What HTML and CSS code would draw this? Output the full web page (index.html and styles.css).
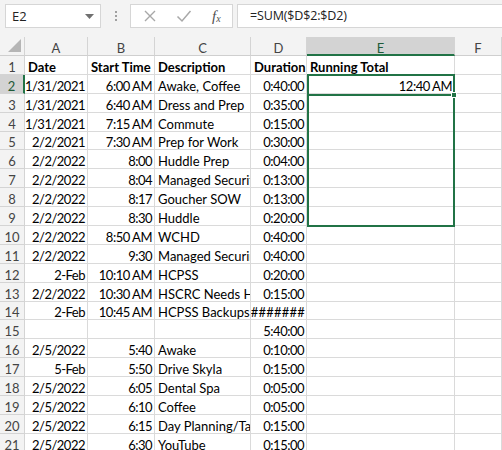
FILE: index.html
```html
<!DOCTYPE html>
<html>
<head>
<meta charset="utf-8">
<link rel="stylesheet" href="styles.css">
</head>
<body>
<div class="app">
  <div class="fbar">
    <div class="namebox">
      <span class="nb-text">E2</span>
      <svg class="nb-arrow" width="9" height="5" viewBox="0 0 9 5"><path d="M0 0 L9 0 L4.5 5 Z" fill="#707070"/></svg>
    </div>
    <div class="grip"><span></span><span></span><span></span></div>
    <div class="fbtns">
      <svg class="ico" width="14" height="14" viewBox="0 0 14 14"><path d="M2 2 L12 12 M12 2 L2 12" stroke="#a8a8a8" stroke-width="1.4" fill="none"/></svg>
      <svg class="ico" width="16" height="14" viewBox="0 0 16 14"><path d="M1.5 7.5 L6 12 L14.5 2" stroke="#a8a8a8" stroke-width="1.5" fill="none"/></svg>
      <span class="fx">f<sub>x</sub></span>
    </div>
    <div class="formula">=SUM($D$2:$D2)</div>
  </div>

  <div class="sheet">
    <div class="corner"><svg width="13" height="13" viewBox="0 0 13 13"><path d="M13 0 L13 13 L0 13 Z" fill="#b5b5b5"/></svg></div>
    <div class="ch">A</div><div class="ch">B</div><div class="ch">C</div><div class="ch">D</div><div class="ch sel">E</div><div class="ch">F</div>

    <div class="rh">1</div><div class="c b">Date</div><div class="c b">Start Time</div><div class="c b">Description</div><div class="c b">Duration</div><div class="c b">Running Total</div><div class="c"></div>
    <div class="rh sel">2</div><div class="c r">1/31/2021</div><div class="c r">6:00 AM</div><div class="c">Awake, Coffee</div><div class="c r">0:40:00</div><div class="c r">12:40 AM</div><div class="c"></div>
    <div class="rh">3</div><div class="c r">1/31/2021</div><div class="c r">6:40 AM</div><div class="c">Dress and Prep</div><div class="c r">0:35:00</div><div class="c"></div><div class="c"></div>
    <div class="rh">4</div><div class="c r">1/31/2021</div><div class="c r">7:15 AM</div><div class="c">Commute</div><div class="c r">0:15:00</div><div class="c"></div><div class="c"></div>
    <div class="rh">5</div><div class="c r">2/2/2021</div><div class="c r">7:30 AM</div><div class="c">Prep for Work</div><div class="c r">0:30:00</div><div class="c"></div><div class="c"></div>
    <div class="rh">6</div><div class="c r">2/2/2022</div><div class="c r">8:00</div><div class="c">Huddle Prep</div><div class="c r">0:04:00</div><div class="c"></div><div class="c"></div>
    <div class="rh">7</div><div class="c r">2/2/2022</div><div class="c r">8:04</div><div class="c">Managed Security</div><div class="c r">0:13:00</div><div class="c"></div><div class="c"></div>
    <div class="rh">8</div><div class="c r">2/2/2022</div><div class="c r">8:17</div><div class="c">Goucher SOW</div><div class="c r">0:13:00</div><div class="c"></div><div class="c"></div>
    <div class="rh">9</div><div class="c r">2/2/2022</div><div class="c r">8:30</div><div class="c">Huddle</div><div class="c r">0:20:00</div><div class="c"></div><div class="c"></div>
    <div class="rh">10</div><div class="c r">2/2/2022</div><div class="c r">8:50 AM</div><div class="c">WCHD</div><div class="c r">0:40:00</div><div class="c"></div><div class="c"></div>
    <div class="rh">11</div><div class="c r">2/2/2022</div><div class="c r">9:30</div><div class="c">Managed Securirty</div><div class="c r">0:40:00</div><div class="c"></div><div class="c"></div>
    <div class="rh">12</div><div class="c r">2-Feb</div><div class="c r">10:10 AM</div><div class="c">HCPSS</div><div class="c r">0:20:00</div><div class="c"></div><div class="c"></div>
    <div class="rh">13</div><div class="c r">2/2/2022</div><div class="c r">10:30 AM</div><div class="c">HSCRC Needs Help</div><div class="c r">0:15:00</div><div class="c"></div><div class="c"></div>
    <div class="rh">14</div><div class="c r">2-Feb</div><div class="c r">10:45 AM</div><div class="c">HCPSS Backups</div><div class="c r hash">########</div><div class="c"></div><div class="c"></div>
    <div class="rh">15</div><div class="c"></div><div class="c"></div><div class="c"></div><div class="c r">5:40:00</div><div class="c"></div><div class="c"></div>
    <div class="rh">16</div><div class="c r">2/5/2022</div><div class="c r">5:40</div><div class="c">Awake</div><div class="c r">0:10:00</div><div class="c"></div><div class="c"></div>
    <div class="rh">17</div><div class="c r">5-Feb</div><div class="c r">5:50</div><div class="c">Drive Skyla</div><div class="c r">0:15:00</div><div class="c"></div><div class="c"></div>
    <div class="rh">18</div><div class="c r">2/5/2022</div><div class="c r">6:05</div><div class="c">Dental Spa</div><div class="c r">0:05:00</div><div class="c"></div><div class="c"></div>
    <div class="rh">19</div><div class="c r">2/5/2022</div><div class="c r">6:10</div><div class="c">Coffee</div><div class="c r">0:05:00</div><div class="c"></div><div class="c"></div>
    <div class="rh">20</div><div class="c r">2/5/2022</div><div class="c r">6:15</div><div class="c">Day Planning/Tasks</div><div class="c r">0:15:00</div><div class="c"></div><div class="c"></div>
    <div class="rh">21</div><div class="c r">2/5/2022</div><div class="c r">6:30</div><div class="c">YouTube</div><div class="c r">0:15:00</div><div class="c"></div><div class="c"></div>

    <div class="selrange"></div>
    <div class="activeline"></div>
    <div class="handle"></div>
  </div>
</div>
</body>
</html>
```
FILE: styles.css
```css
html, body {
  margin: 0;
  padding: 0;
  width: 502px;
  height: 450px;
  overflow: hidden;
  background: #ffffff;
}
.app {
  width: 502px;
  height: 450px;
  background: #f3f3f3;
  font-family: "Lato", "Liberation Sans", sans-serif;
}
.fbar {
  height: 37px;
  display: flex;
  align-items: flex-start;
  padding-top: 4px;
  box-sizing: border-box;
}
.namebox {
  margin-left: 5px;
  width: 96px;
  height: 24px;
  box-sizing: border-box;
  background: #fff;
  border: 1px solid #d6d6d6;
  display: flex;
  align-items: center;
  justify-content: space-between;
  padding: 0 6px 0 6px;
  font-family: "Open Sans", "Liberation Sans", sans-serif;
  font-size: 13px;
  color: #222;
}
.nb-text { margin-top: -1px; }
.nb-arrow { margin-top: 1px; }
.grip {
  width: 29px;
  height: 24px;
  display: flex;
  flex-direction: column;
  align-items: center;
  justify-content: center;
  gap: 2px;
}
.grip span {
  width: 2px;
  height: 2px;
  background: #a0a0a0;
}
.fbtns {
  width: 103px;
  height: 24px;
  box-sizing: border-box;
  background: #fff;
  border: 1px solid #d6d6d6;
  display: flex;
  align-items: center;
  padding-left: 12px;
  gap: 19px;
}
.fx {
  font-family: "Liberation Serif", serif;
  font-style: italic;
  font-size: 15px;
  color: #505050;
  margin-left: 1px;
  line-height: 1;
}
.fx sub {
  font-size: 10px;
  vertical-align: -1px;
}
.formula {
  margin-left: 4px;
  flex: 1;
  height: 24px;
  box-sizing: border-box;
  background: #fff;
  border: 1px solid #d6d6d6;
  border-right: none;
  font-family: "Open Sans", "Liberation Sans", sans-serif;
  font-size: 12.5px;
  letter-spacing: -0.15px;
  color: #222;
  padding-left: 12px;
  line-height: 22px;
}
.sheet {
  position: relative;
  display: grid;
  grid-template-columns: 25px 63px 67px 96px 56px 148px 1fr;
  grid-template-rows: 19px repeat(21, 18.9px);
  background: #fff;
}
.corner {
  background: #f3f3f3;
  border-right: 1px solid #d4d4d4;
  border-bottom: 1px solid #cfcfcf;
  box-sizing: border-box;
  display: flex;
  align-items: flex-end;
  justify-content: flex-end;
  padding: 0 3px 3px 0;
}
.corner svg { display: block; }
.ch {
  background: #f3f3f3;
  border-right: 1px solid #d4d4d4;
  border-bottom: 1px solid #cfcfcf;
  box-sizing: border-box;
  font-size: 13px;
  color: #444;
  text-align: center;
  padding-top: 2px;
  line-height: 18px;
}
.ch.sel {
  background: #d3d3d3;
  color: #1e5a38;
  border-bottom: 2px solid #217346;
}
.rh {
  background: #f3f3f3;
  border-right: 1px solid #d4d4d4;
  border-bottom: 1px solid #d4d4d4;
  box-sizing: border-box;
  font-size: 13px;
  color: #444;
  text-align: center;
  display: flex;
  align-items: flex-end;
  justify-content: center;
  padding-bottom: 0;
  line-height: 14px;
}
.rh.sel {
  background: #d3d3d3;
  color: #1e5a38;
  border-right: 2px solid #217346;
}
.c {
  border-right: 1px solid #dadada;
  border-bottom: 1px solid #dadada;
  box-sizing: border-box;
  font-size: 13px;
  color: #000;
  white-space: nowrap;
  overflow: hidden;
  padding: 0 2px 0 3px;
  line-height: 14px;
  display: flex;
  align-items: flex-end;
  justify-content: flex-start;
}
.c.r { justify-content: flex-end; letter-spacing: -0.5px; }
.c.b { font-weight: bold; letter-spacing: 0; }
.c.hash { padding: 0 1px 0 0; letter-spacing: 0.2px; }
.selrange {
  position: absolute;
  left: 307px;
  top: 37px;
  width: 148px;
  height: 153px;
  border: 2px solid #217346;
  box-sizing: border-box;
}
.activeline {
  position: absolute;
  left: 307px;
  top: 56.5px;
  width: 146px;
  height: 2px;
  background: #217346;
}
.handle {
  position: absolute;
  left: 451px;
  top: 54.5px;
  width: 6px;
  height: 6px;
  background: #217346;
  border: 1px solid #fff;
  box-sizing: border-box;
}
```
